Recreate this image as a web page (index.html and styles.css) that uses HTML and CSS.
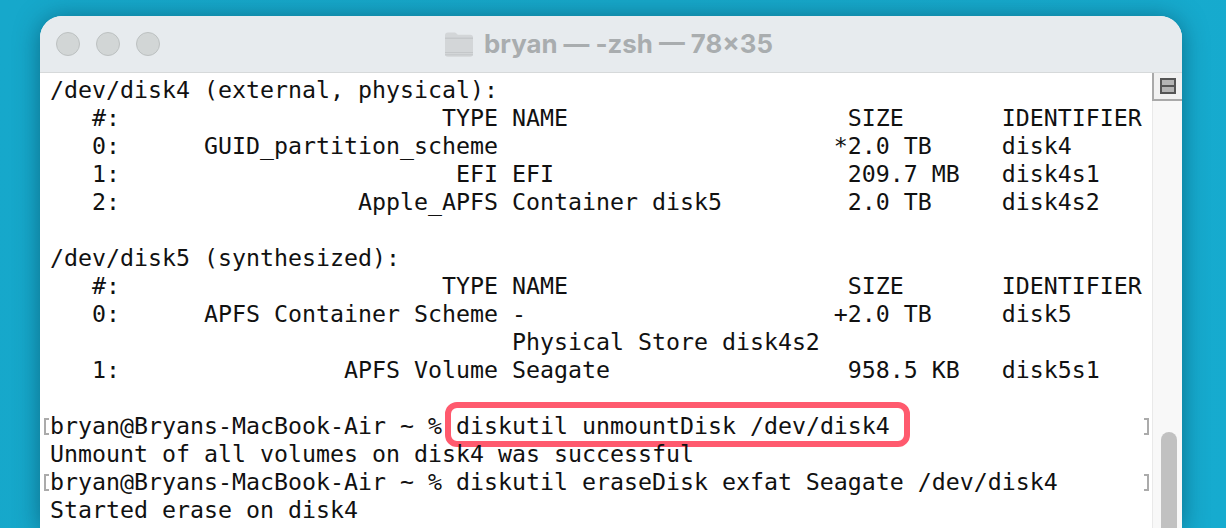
FILE: index.html
```
<!DOCTYPE html>
<html lang="en">
<head>
<meta charset="utf-8">
<title>bryan — -zsh — 78×35</title>
<link rel="stylesheet" href="styles.css">
</head>
<body>
<div class="window">
  <header class="titlebar">
    <div class="lights"><span class="light"></span><span class="light"></span><span class="light"></span></div>
    <div class="title">
      <svg class="folder" width="30" height="28" viewBox="0 0 30 28" aria-hidden="true">
        <path d="M1 5.5C1 3.6 2 2.5 3.800 2.500h6.400c1 0 1.600.3 2.300 1l1.300 1.300h12.400c1.800 0 2.800 1 2.800 2.800V24c0 1.800-1 2.800-2.800 2.800H3.800C2 26.800 1 25.800 1 24z" fill="#d3d6d8"/>
        <path d="M1 8.200h28" stroke="#bfc2c4" stroke-width="1" fill="none"/>
        <path d="M1 22.500h28M1 24.800h28" stroke="#c4c7c9" stroke-width="1" fill="none"/>
      </svg>
      <span class="title-text">bryan — -zsh — 78×35</span>
    </div>
  </header>
  <div class="body">
    <pre class="output"><div class="line">/dev/disk4 (external, physical):</div><div class="line">   #:                       TYPE NAME                    SIZE       IDENTIFIER</div><div class="line">   0:      GUID_partition_scheme                        *2.0 TB     disk4</div><div class="line">   1:                        EFI EFI                     209.7 MB   disk4s1</div><div class="line">   2:                 Apple_APFS Container disk5         2.0 TB     disk4s2</div><div class="line"> </div><div class="line">/dev/disk5 (synthesized):</div><div class="line">   #:                       TYPE NAME                    SIZE       IDENTIFIER</div><div class="line">   0:      APFS Container Scheme -                      +2.0 TB     disk5</div><div class="line">                                 Physical Store disk4s2</div><div class="line">   1:                APFS Volume Seagate                 958.5 KB   disk5s1</div><div class="line"> </div><div class="line prompt">bryan@Bryans-MacBook-Air ~ % <span class="command">diskutil unmountDisk /dev/disk4</span></div><div class="line">Unmount of all volumes on disk4 was successful</div><div class="line prompt">bryan@Bryans-MacBook-Air ~ % diskutil eraseDisk exfat Seagate /dev/disk4</div><div class="line">Started erase on disk4</div></pre>
    <aside class="scrollbar">
      <div class="split"><span class="split-icon"></span></div>
      <div class="track"><div class="thumb"></div></div>
    </aside>
  </div>
</div>
</body>
</html>
```
FILE: styles.css
```
html, body {
  margin: 0;
  height: 100%;
  overflow: hidden;
}
body {
  background: linear-gradient(100deg, #16a8cb 0%, #17a7c9 50%, #16abcf 100%);
  padding: 16px 44px 0 40px;
  box-sizing: border-box;
}
.window {
  height: 512px;
  display: flex;
  flex-direction: column;
  background: #fff;
  border-radius: 22px 22px 0 0;
  overflow: hidden;
  box-shadow: 0 2px 24px rgba(0, 50, 70, 0.5);
}
.titlebar {
  height: 56px;
  flex: none;
  display: flex;
  align-items: center;
  position: relative;
  background: #e7ebee;
  border-bottom: 1px solid #d6d9da;
}
.lights {
  display: flex;
  gap: 16px;
  padding-left: 16px;
}
.light {
  width: 22px;
  height: 22px;
  border-radius: 50%;
  background: #d2d6d6;
  border: 1px solid #bcc0c0;
}
.title {
  position: absolute;
  left: 404px;
  top: 13px;
  display: flex;
  align-items: center;
  gap: 10px;
}
.folder {
  display: block;
}
.title-text {
  font-family: Inter, "Liberation Sans", sans-serif;
  font-weight: 700;
  font-size: 25.8px;
  line-height: 30px;
  color: #a9adaf;
  white-space: nowrap;
}
.body {
  flex: 1;
  display: flex;
  min-height: 0;
}
.output {
  flex: 1;
  margin: 0;
  padding: 3px 0 0 10px;
  overflow: hidden;
  font-family: "DejaVu Sans Mono", "Liberation Mono", monospace;
  font-size: 23.25px;
  line-height: 28px;
  color: #111;
}
.line {
  height: 28px;
  position: relative;
}
.prompt::before,
.prompt::after {
  content: "";
  position: absolute;
  top: 6px;
  width: 3px;
  height: 13px;
  border: 2px solid #ababab;
}
.prompt::before {
  left: -6px;
  border-right: 0;
}
.prompt::after {
  right: 3px;
  border-left: 0;
}
.command {
  position: relative;
}
.command::after {
  content: "";
  position: absolute;
  left: -11px;
  right: -20px;
  top: -10px;
  bottom: -8px;
  border: 6px solid #ff5a6e;
  border-radius: 12px;
}
.scrollbar {
  width: 29px;
  flex: none;
  display: flex;
  flex-direction: column;
  border-left: 1px solid #e9e9e9;
  background: #f8f8f8;
}
.split {
  flex: none;
  display: flex;
  justify-content: center;
  padding-top: 5px;
  height: 21px;
  background: #f1f1f1;
  border-bottom: 2px solid #a9a9a9;
  border-left: 2px solid #a9a9a9;
  margin-left: -1px;
}
.split-icon {
  width: 16px;
  height: 16px;
  box-sizing: border-box;
  border: 2px solid #555;
  background: linear-gradient(#b4b4b4 0 5px, #555 5px 7px, #b4b4b4 7px);
}
.track {
  flex: 1;
  position: relative;
}
.thumb {
  position: absolute;
  left: 8px;
  width: 16px;
  top: 331px;
  bottom: 0;
  background: #c1c1c1;
  border-radius: 8px 8px 0 0;
}
```
